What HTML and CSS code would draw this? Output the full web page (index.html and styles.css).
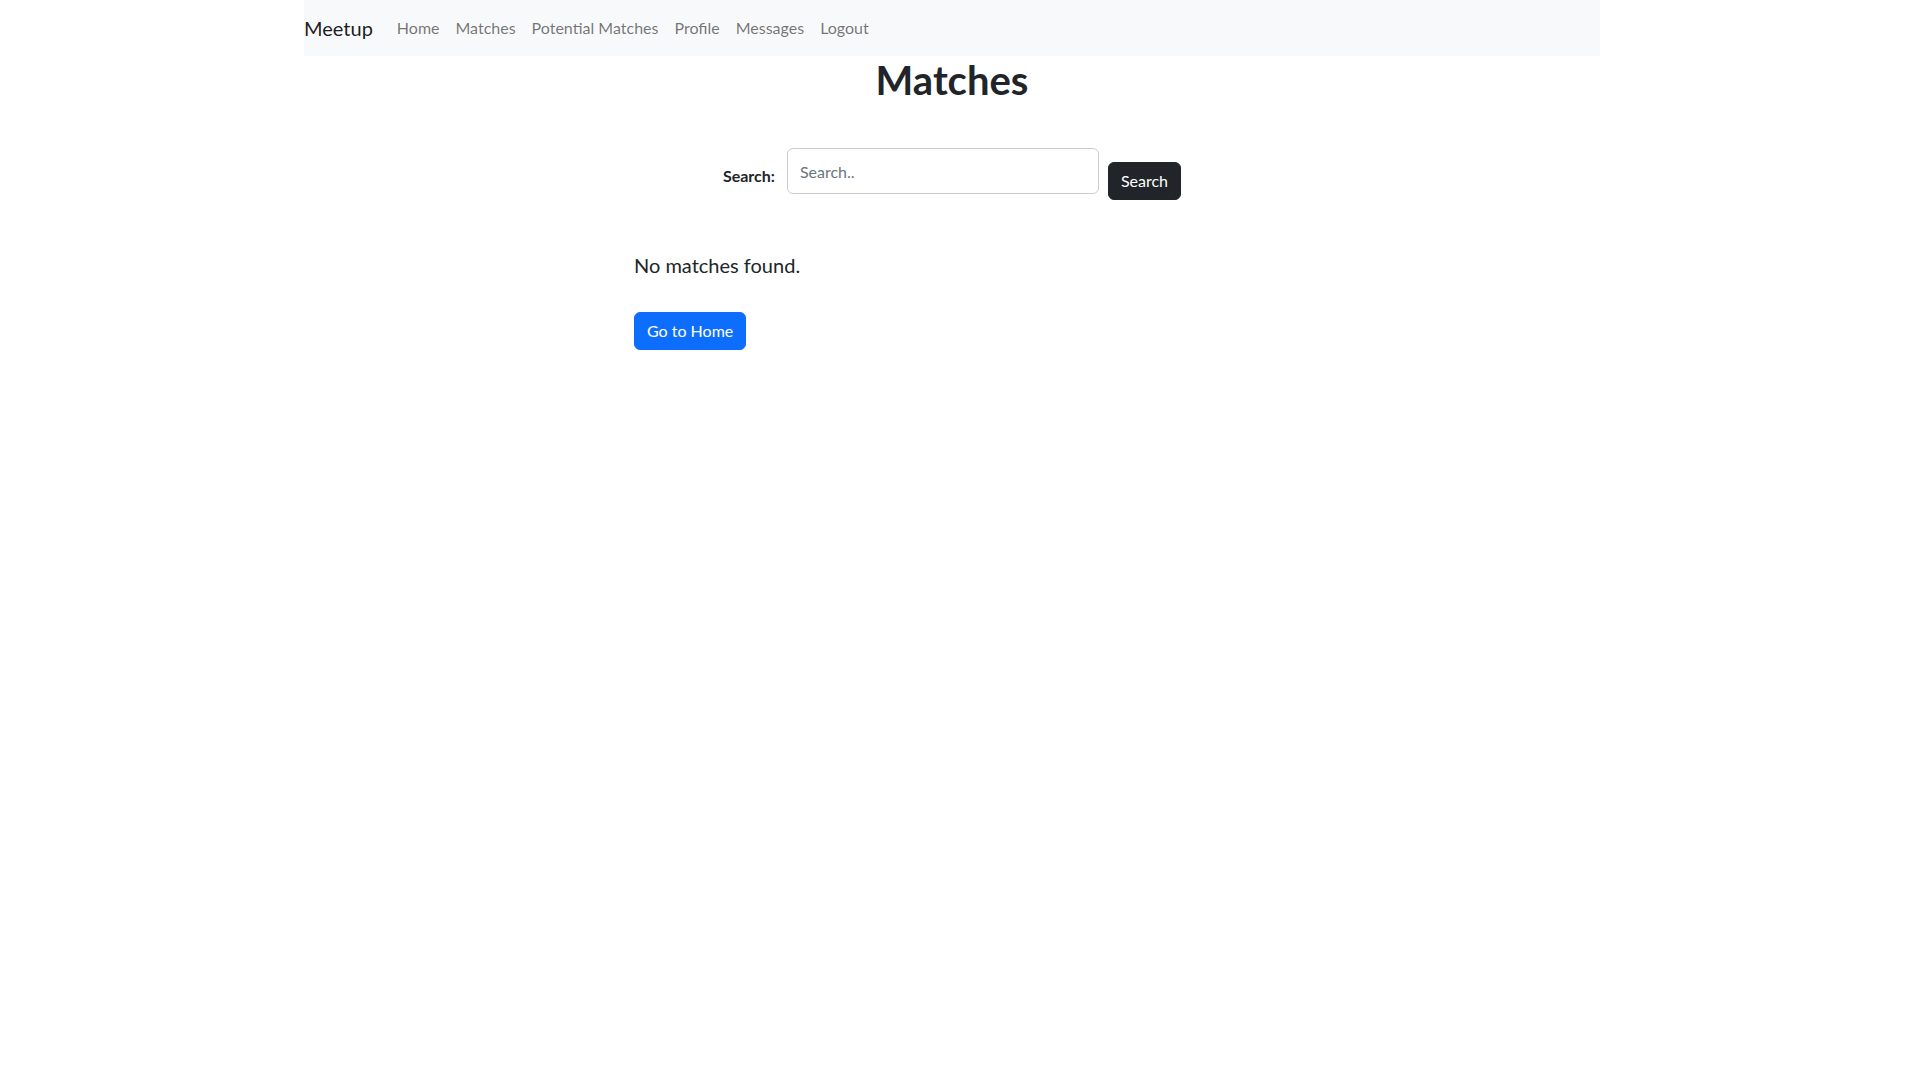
FILE: index.html
```html
<!DOCTYPE html>
<html lang="en">
<head>
<meta charset="utf-8">
<title>Matches</title>
<link rel="stylesheet" href="styles.css">
</head>
<body>
<div class="page">
  <div class="container">
    <nav class="navbar">
      <a class="brand" href="#">Meetup</a>
      <ul class="nav-links">
        <li><a href="#">Home</a></li>
        <li><a href="#">Matches</a></li>
        <li><a href="#">Potential Matches</a></li>
        <li><a href="#">Profile</a></li>
        <li><a href="#">Messages</a></li>
        <li><a href="#">Logout</a></li>
      </ul>
    </nav>
    <h1 class="title">Matches</h1>
    <form class="search-form">
      <label class="search-label" for="q">Search:</label>
      <input class="search-input" id="q" type="text" placeholder="Search..">
      <button class="btn btn-dark" type="button">Search</button>
    </form>
    <div class="results">
      <p class="lead">No matches found.</p>
      <a class="btn btn-primary" href="#">Go to Home</a>
    </div>
  </div>
</div>
</body>
</html>
```
FILE: styles.css
```css
* { box-sizing: border-box; }
html, body { margin: 0; padding: 0; }
body {
  font-family: Lato, "Open Sans", sans-serif;
  font-size: 16px;
  line-height: 1.5;
  color: #212529;
  background: #fff;
}
.page { width: 1904px; }
.container { max-width: 1296px; margin: 0 auto; }
.navbar {
  display: flex;
  align-items: center;
  background: #f8f9fa;
  padding: 8px 0;
  height: 56px;
}
.brand {
  font-size: 20px;
  line-height: 30px;
  color: rgba(0,0,0,.9);
  text-decoration: none;
  margin-right: 16px;
}
.nav-links { display: flex; list-style: none; margin: 0; padding: 0; }
.nav-links a {
  display: block;
  padding: 8px;
  color: rgba(0,0,0,.55);
  text-decoration: none;
  line-height: 24px;
}
.title {
  margin: 0 0 8px;
  text-align: center;
  font-size: 40px;
  font-weight: 700;
  line-height: 48px;
}
.search-form {
  display: flex;
  justify-content: center;
  align-items: flex-start;
  margin-top: 44px;
}
.search-label { font-weight: 700; margin-top: 16px; margin-right: 12px; line-height: 24px; }
.search-input {
  width: 312px;
  height: 46px;
  padding: 10px 12px;
  font: inherit;
  color: #212529;
  border: 1px solid #ccc;
  border-radius: 6px;
  margin: 0 9px 0 0;
}
.search-input::placeholder { color: #6c757d; }
.btn {
  display: inline-block;
  padding: 6px 12px;
  font: inherit;
  line-height: 24px;
  border: 1px solid transparent;
  border-radius: 6px;
  text-decoration: none;
  cursor: pointer;
}
.btn-dark { background: #212529; border-color: #212529; color: #fff; margin-top: 14px; }
.btn-primary { background: #0d6efd; border-color: #0d6efd; color: #fff; }
.results { width: 636px; margin: 50px auto 0; }
.lead { font-size: 20px; line-height: 30px; margin: 0 0 32px; }
```
